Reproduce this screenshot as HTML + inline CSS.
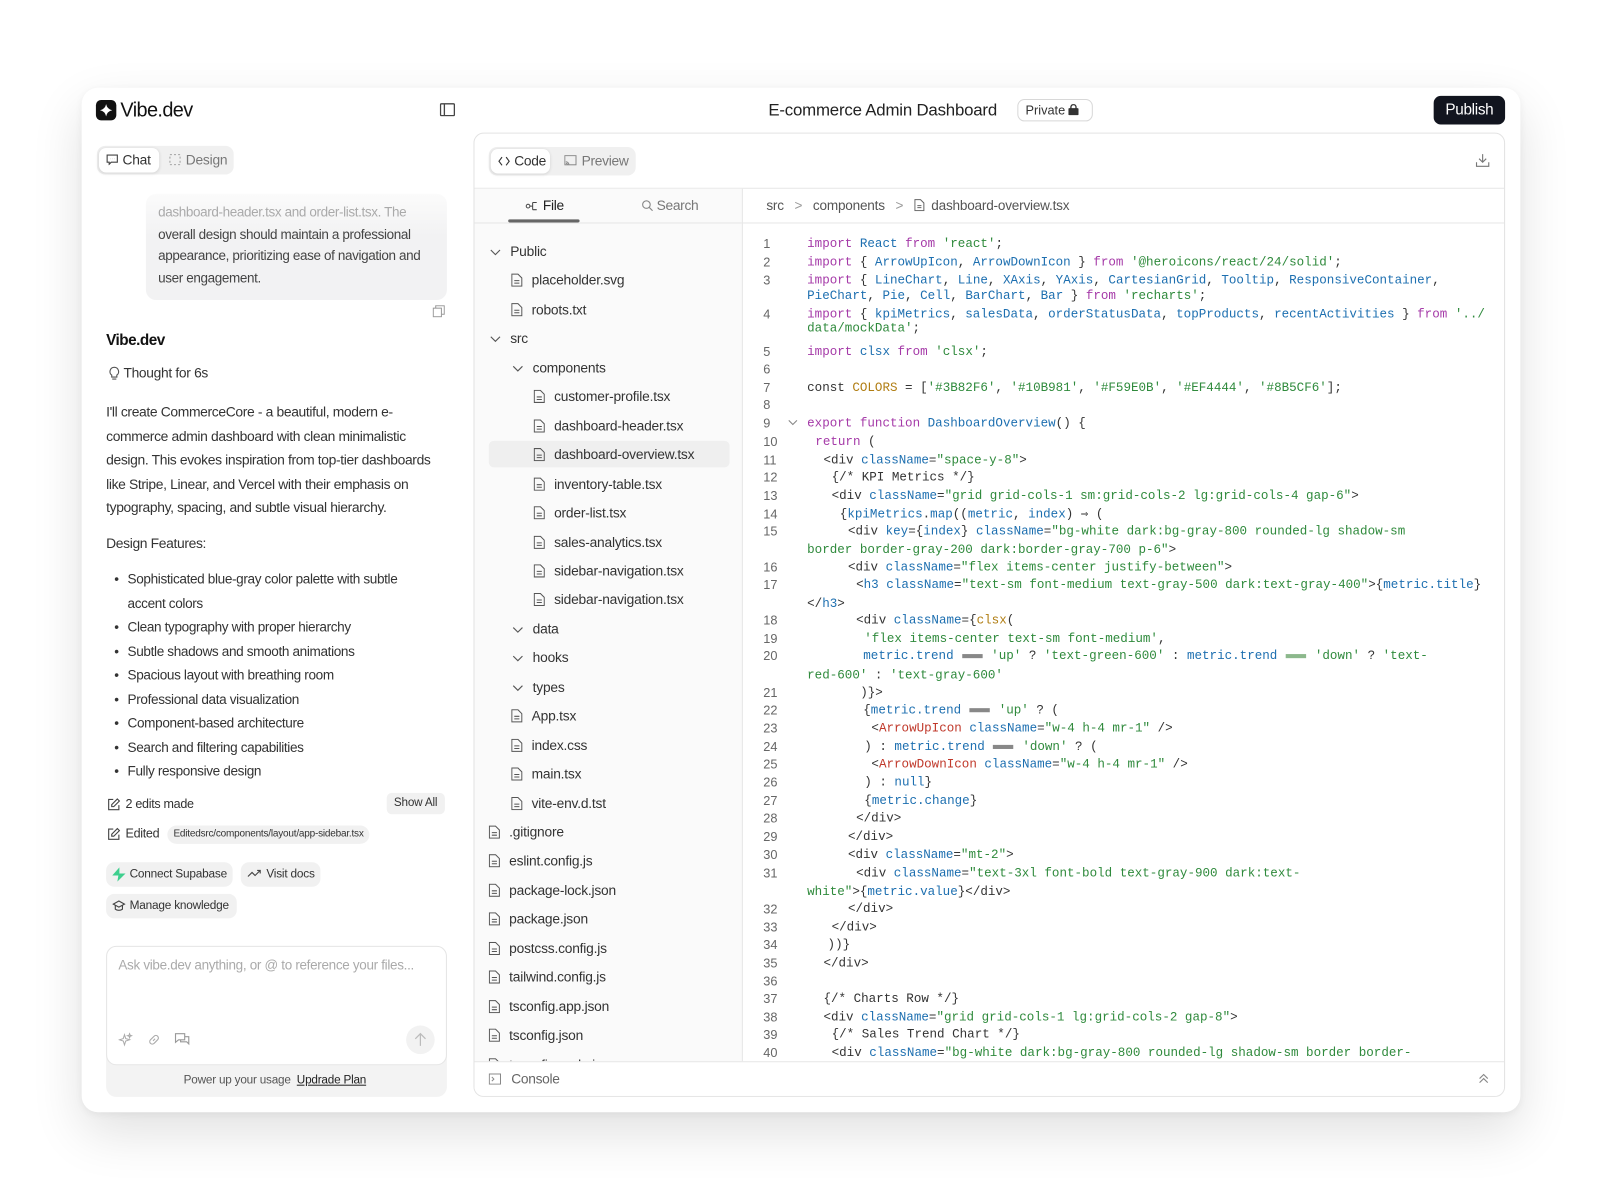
<!DOCTYPE html>
<html><head><meta charset="utf-8">
<style>
*{box-sizing:border-box;margin:0;padding:0}
html,body{width:1600px;height:1200px;overflow:hidden;background:#fff;font-family:"Liberation Sans",sans-serif;color:#222}
#st{position:absolute;left:0;top:0;width:1568px;height:1176px;transform:scale(1.0204);transform-origin:0 0;background:#fff}
.a{position:absolute;white-space:nowrap}
.card{position:absolute;left:80px;top:86px;width:1410px;height:1004px;background:#fff;border-radius:16px;box-shadow:0 20px 50px rgba(0,0,0,.12),0 2px 8px rgba(0,0,0,.05)}
.panel{position:absolute;left:464px;top:130px;width:1011px;height:945px;border:1px solid #e3e3e3;border-radius:10px;background:#fff;overflow:hidden}
.tree{position:absolute;left:0;top:54px;width:263px;height:856px;background:#fafafa;border-right:1px solid #e6e6e6;overflow:hidden}
.row{position:absolute;font-size:13.5px;color:#333;height:20px;line-height:20px;letter-spacing:-.2px;white-space:nowrap}
.row svg{display:block}
.code{position:absolute;left:263px;top:88px;right:0;height:822px;overflow:hidden;font-family:"Liberation Mono",monospace;font-size:12.3px}
.ln{position:absolute;left:20px;width:20px;color:#666;font-family:"Liberation Sans",sans-serif;font-size:12.5px;height:18px;line-height:18px}
.cl{position:absolute;height:18px;line-height:18px;white-space:pre;color:#333}
.k{color:#a53aa8}.b{color:#1d6fb0}.s{color:#2f8a3c}.o{color:#b07d12}.r{color:#c0392b}.g{color:#555}
.eq{display:inline-block;width:20px;height:4px;background:#888;vertical-align:middle;margin:0 1px}
.eqg{background:#8cb88c}
.pill{position:absolute;background:#f1f1f1;border-radius:8px;font-size:12px;color:#333;height:24px;line-height:24px;padding:0 7px;white-space:nowrap;letter-spacing:-.2px}
.p{position:absolute;font-size:13.6px;color:#333;line-height:23.5px;white-space:nowrap;letter-spacing:-.35px}
</style></head><body><div id="st">
<div class="card"></div>
<div class="a" style="left:94px;top:98px;width:20px;height:20px;background:#111;border-radius:5px"><svg width="20" height="20" viewBox="0 0 20 20"><path d="M10 4 Q11 9 16 10 Q11 11 10 16 Q9 11 4 10 Q9 9 10 4Z" fill="#fff"/></svg></div>
<div class="a" style="left:118px;top:97px;font-size:19.5px;color:#111;letter-spacing:-.6px">Vibe.dev</div>
<svg class="a" style="left:431px;top:101px" width="15" height="13" viewBox="0 0 15 13"><rect x=".7" y=".7" width="13.6" height="11.6" rx="1" fill="none" stroke="#444" stroke-width="1.3"/><line x1="4.5" y1="1" x2="4.5" y2="12" stroke="#444" stroke-width="1.3"/></svg>
<div class="a" style="left:753px;top:99px;font-size:16.5px;color:#222;letter-spacing:-.2px">E-commerce Admin Dashboard</div>
<div class="a" style="left:997px;top:97px;width:74px;height:22px;border:1px solid #d8d8d8;border-radius:7px;font-size:12.5px;line-height:20px;padding-left:7px;color:#333">Private <svg width="10" height="11" viewBox="0 0 10 11" style="vertical-align:-1px"><rect x="0" y="4" width="10" height="7" rx="1" fill="#333"/><path d="M2.5 4.5V3a2.5 2.5 0 015 0v1.5" fill="none" stroke="#333" stroke-width="1.3"/></svg></div>
<div class="a" style="left:1405px;top:94px;width:70px;height:28px;background:#12151f;border-radius:7px;color:#fff;font-size:15px;line-height:28px;text-align:center;letter-spacing:-.3px">Publish</div>
<div class="a" style="left:95px;top:143px;width:134px;height:28px;background:#f0f0f0;border-radius:8px"></div>
<div class="a" style="left:97px;top:145px;width:59px;height:24px;background:#fff;border-radius:7px;box-shadow:0 1px 3px rgba(0,0,0,.12)"></div>
<svg class="a" style="left:104px;top:151px" width="12" height="11" viewBox="0 0 12 11"><path d="M1 1h10v7H5l-2 2V8H1z" fill="none" stroke="#444" stroke-width="1.1"/><path d="M4 4.5h.1M6 4.5h.1M8 4.5h.1" stroke="#444" stroke-width="1.3"/></svg>
<div class="a" style="left:120px;top:149px;font-size:13.5px;color:#333;letter-spacing:-.2px">Chat</div>
<svg class="a" style="left:166px;top:151px" width="11" height="11"><rect x=".5" y=".5" width="10" height="10" fill="none" stroke="#999" stroke-dasharray="2 2"/></svg>
<div class="a" style="left:182px;top:149px;font-size:13.5px;color:#777;letter-spacing:-.2px">Design</div>
<div class="a" style="left:143px;top:190px;width:295px;height:104px;border-radius:10px;background:linear-gradient(#fbfbfb,#f2f2f3 40%)"></div>
<div class="a" style="left:155px;top:197px;font-size:13.2px;line-height:21.5px;color:#444;letter-spacing:-.35px">
<span style="color:#aaa">dashboard-header.tsx and order-list.tsx. The</span><br>overall design should maintain a professional<br>appearance, prioritizing ease of navigation and<br>user engagement.</div>
<svg class="a" style="left:424px;top:299px" width="12" height="12" viewBox="0 0 12 12"><rect x=".6" y="3" width="8" height="8.4" fill="none" stroke="#999"/><path d="M3 3V.6h8.4V9H9" fill="none" stroke="#999"/></svg>
<div class="a" style="left:104px;top:325px;font-size:15px;font-weight:bold;color:#111;letter-spacing:-.5px">Vibe.dev</div>
<svg class="a" style="left:106px;top:359px" width="12" height="14" viewBox="0 0 12 14"><path d="M6 1a4.2 4.2 0 00-2.5 7.6V10.5h5V8.6A4.2 4.2 0 006 1zM4 12.5h4" fill="none" stroke="#555" stroke-width="1.1"/></svg>
<div class="a" style="left:121px;top:358px;font-size:13.5px;color:#333;letter-spacing:-.3px">Thought for 6s</div>
<div class="p" style="left:104px;top:392px">I'll create CommerceCore - a beautiful, modern e-<br>commerce admin dashboard with clean minimalistic<br>design. This evokes inspiration from top-tier dashboards<br>like Stripe, Linear, and Vercel with their emphasis on<br>typography, spacing, and subtle visual hierarchy.</div>
<div class="p" style="left:104px;top:521px">Design Features:</div>
<div class="p" style="left:112px;top:556px;font-size:13.3px">•<br><br>•<br>•<br>•<br>•<br>•<br>•<br>•</div>
<div class="p" style="left:125px;top:556px;font-size:13.3px">Sophisticated blue-gray color palette with subtle<br>accent colors<br>Clean typography with proper hierarchy<br>Subtle shadows and smooth animations<br>Spacious layout with breathing room<br>Professional data visualization<br>Component-based architecture<br>Search and filtering capabilities<br>Fully responsive design</div>
<svg class="a" style="left:105px;top:782px" width="13" height="13" viewBox="0 0 13 13"><path d="M6 1.5H1.5v10h10V7" fill="none" stroke="#444" stroke-width="1.1"/><path d="M10 1l2 2-5.5 5.5H4.5v-2z" fill="none" stroke="#444" stroke-width="1.1"/></svg>
<div class="a" style="left:123px;top:781px;font-size:12.3px;color:#333;letter-spacing:-.3px">2 edits made</div>
<div class="pill" style="left:379px;top:777px;height:21px;line-height:21px;font-size:11.5px;border-radius:5px">Show All</div>
<svg class="a" style="left:105px;top:811px" width="13" height="13" viewBox="0 0 13 13"><path d="M6 1.5H1.5v10h10V7" fill="none" stroke="#444" stroke-width="1.1"/><path d="M10 1l2 2-5.5 5.5H4.5v-2z" fill="none" stroke="#444" stroke-width="1.1"/></svg>
<div class="a" style="left:123px;top:810px;font-size:12.3px;color:#333;letter-spacing:-.3px">Edited</div>
<div class="pill" style="left:164px;top:809px;height:18px;line-height:18px;font-size:9.8px;border-radius:9px;padding:0 6px;letter-spacing:-.2px">Editedsrc/components/layout/app-sidebar.tsx</div>
<div class="pill" style="left:104px;top:845px;width:124px;padding-left:23px;font-size:11.6px">Connect Supabase</div>
<svg class="a" style="left:110px;top:850px" width="13" height="14" viewBox="0 0 13 14"><path d="M7 0L0 8h6l-1 6 8-8H7z" fill="#3ecf8e"/></svg>
<div class="pill" style="left:236px;top:845px;width:78px;padding-left:25px;font-size:11.6px">Visit docs</div>
<svg class="a" style="left:242px;top:851px" width="14" height="10" viewBox="0 0 14 10"><path d="M1 8l4-4 3 3 5-5M10 2h3v3" fill="none" stroke="#444" stroke-width="1.1"/></svg>
<div class="pill" style="left:104px;top:876px;width:128px;padding-left:23px;font-size:11.6px">Manage knowledge</div>
<svg class="a" style="left:110px;top:882px" width="13" height="12" viewBox="0 0 13 12"><path d="M6.5 1L12 4 6.5 7 1 4zM3 5.5V9c2 1.5 5 1.5 7 0V5.5" fill="none" stroke="#444" stroke-width="1.1"/></svg>
<div class="a" style="left:104px;top:927px;width:334px;height:148px;background:#f3f3f3;border-radius:10px"></div>
<div class="a" style="left:104px;top:927px;width:334px;height:117px;background:#fff;border:1px solid #e5e5e5;border-radius:10px"></div>
<div class="a" style="left:116px;top:938px;font-size:13.2px;color:#aaa;letter-spacing:-.3px">Ask vibe.dev anything, or @ to reference your files...</div>
<svg class="a" style="left:116px;top:1012px" width="14" height="14" viewBox="0 0 14 14"><path d="M6 2l1.2 3.8L11 7 7.2 8.2 6 12 4.8 8.2 1 7l3.8-1.2zM11 1l.5 1.5L13 3l-1.5.5L11 5l-.5-1.5L9 3l1.5-.5z" fill="none" stroke="#aaa" stroke-width="1"/></svg>
<svg class="a" style="left:144px;top:1012px" width="14" height="14" viewBox="0 0 14 14"><path d="M6 8l2-2M5 5.5L7 3.5a2.4 2.4 0 013.5 3.5L8.5 9M9 8.5L7 10.5A2.4 2.4 0 013.5 7L5.5 5" fill="none" stroke="#aaa" stroke-width="1.1"/></svg>
<svg class="a" style="left:171px;top:1012px" width="15" height="14" viewBox="0 0 15 14"><path d="M1 1h9v6H4l-3 2.5zM10 4h4v7l-2-2H6V7" fill="none" stroke="#999" stroke-width="1.1"/></svg>
<div class="a" style="left:398px;top:1005px;width:28px;height:28px;border-radius:14px;background:#f2f2f2"></div>
<svg class="a" style="left:406px;top:1012px" width="12" height="14" viewBox="0 0 12 14"><path d="M6 13V1M1 6l5-5 5 5" fill="none" stroke="#bbb" stroke-width="1.2"/></svg>
<div class="a" style="left:180px;top:1053px;font-size:11.5px;color:#555;letter-spacing:-.2px">Power up your usage &nbsp;<span style="color:#222;text-decoration:underline">Updrade Plan</span></div>
<div class="panel">
 <div class="a" style="left:0;top:53px;width:100%;height:1px;background:#e6e6e6"></div>
 <div class="a" style="left:14px;top:13px;width:144px;height:28px;background:#f0f0f0;border-radius:8px"></div>
 <div class="a" style="left:16px;top:15px;width:58px;height:24px;background:#fff;border-radius:7px;box-shadow:0 1px 3px rgba(0,0,0,.12)"></div>
 <svg class="a" style="left:23px;top:22px" width="12" height="10" viewBox="0 0 12 10"><path d="M4 1L1 5l3 4M8 1l3 4-3 4" fill="none" stroke="#333" stroke-width="1.1"/></svg>
 <div class="a" style="left:39px;top:19px;font-size:13.5px;color:#333;letter-spacing:-.3px">Code</div>
 <svg class="a" style="left:88px;top:21px" width="12" height="11"><rect x=".5" y=".5" width="11" height="9" fill="none" stroke="#888"/><path d="M1.5 6.5a3 3 0 013 3M1.5 8a1.5 1.5 0 011.5 1.5" fill="none" stroke="#888"/></svg>
 <div class="a" style="left:105px;top:19px;font-size:13.5px;color:#777;letter-spacing:-.3px">Preview</div>
 <svg class="a" style="left:981px;top:19px" width="14" height="14" viewBox="0 0 14 14"><path d="M7 1v8M3.5 5.5L7 9l3.5-3.5M1 9v4h12V9" fill="none" stroke="#777" stroke-width="1.1"/></svg>
 <div class="tree">
  <div class="a" style="left:0;top:33px;width:263px;height:1px;background:#e6e6e6"></div>
  <div class="a" style="left:33px;top:30px;width:70px;height:3px;background:#666;border-radius:2px"></div>
  <svg class="a" style="left:50px;top:12px" width="12" height="10" viewBox="0 0 12 10"><circle cx="2.5" cy="5" r="1.8" fill="none" stroke="#444"/><path d="M4.3 5H7M7 1.5v7M7 1.5h4M7 8.5h4" fill="none" stroke="#444"/></svg>
  <div class="a" style="left:67px;top:9px;font-size:13.5px;color:#222;letter-spacing:-.3px">File</div>
  <div class="a" style="left:164px;top:9px;font-size:13.5px;color:#777;letter-spacing:-.3px">
   <svg width="11" height="11" viewBox="0 0 11 11" style="vertical-align:-1px"><circle cx="4.5" cy="4.5" r="3.7" fill="none" stroke="#888" stroke-width="1.1"/><path d="M7.3 7.3L10.5 10.5" stroke="#888" stroke-width="1.1"/></svg> Search</div>
 </div>
 <div class="a" style="left:14px;top:301px;width:236px;height:26px;background:#efefef;border-radius:5px"></div>
 <div id="tr"></div>
 <div class="a" style="left:263px;top:54px;right:0;height:34px;border-bottom:1px solid #e6e6e6"></div>
 <div class="a" style="left:286px;top:63px;font-size:13.3px;color:#555;letter-spacing:-.2px">src &nbsp;&nbsp;<span style="color:#999">&gt;</span>&nbsp;&nbsp; components &nbsp;&nbsp;<span style="color:#999">&gt;</span>&nbsp;&nbsp; <svg width="10" height="12" viewBox="0 0 10 12" style="vertical-align:-1px"><path d="M.6.6h5.5l3.3 3.3v7.5H.6z M3 6.5h4M3 8.5h4" fill="none" stroke="#666" stroke-width="1"/></svg>&nbsp; dashboard-overview.tsx</div>
 <div class="code" id="cd"></div>
 <div class="a" style="left:0;top:909px;width:100%;height:36px;border-top:1px solid #e6e6e6;background:#fff"></div>
 <svg class="a" style="left:14px;top:921px" width="12" height="11"><rect x=".5" y=".5" width="11" height="10" fill="none" stroke="#888"/><path d="M3 3.5l2 2-2 2" fill="none" stroke="#888"/></svg>
 <div class="a" style="left:36px;top:919px;font-size:13.5px;color:#666;letter-spacing:-.3px">Console</div>
 <svg class="a" style="left:983px;top:920px" width="12" height="12" viewBox="0 0 12 12"><path d="M2 6l4-4 4 4M2 10l4-4 4 4" fill="none" stroke="#888" stroke-width="1.1"/></svg>
</div>
</div>
<script>
var F='<svg width="11" height="13" viewBox="0 0 11 13"><path d="M.6.6h6l3.8 3.8v8H.6z M3 7h5M3 9.5h5" fill="none" stroke="#555" stroke-width="1"/></svg>';
var C='<svg width="11" height="7" viewBox="0 0 11 7"><path d="M1 1l4.5 4.5L10 1" fill="none" stroke="#555" stroke-width="1.1"/></svg>';
var items=[[0,'c','Public'],[1,'f','placeholder.svg'],[1,'f','robots.txt'],[0,'c','src'],[1,'c','components'],[2,'f','customer-profile.tsx'],[2,'f','dashboard-header.tsx'],[2,'f','dashboard-overview.tsx'],[2,'f','inventory-table.tsx'],[2,'f','order-list.tsx'],[2,'f','sales-analytics.tsx'],[2,'f','sidebar-navigation.tsx'],[2,'f','sidebar-navigation.tsx'],[1,'c','data'],[1,'c','hooks'],[1,'c','types'],[1,'f','App.tsx'],[1,'f','index.css'],[1,'f','main.tsx'],[1,'f','vite-env.d.tst'],[0,'f','.gitignore'],[0,'f','eslint.config.js'],[0,'f','package-lock.json'],[0,'f','package.json'],[0,'f','postcss.config.js'],[0,'f','tailwind.config.js'],[0,'f','tsconfig.app.json'],[0,'f','tsconfig.json'],[0,'f','tsconfig.node.json']];
var h='';items.forEach(function(it,i){var y=116+28.45*i-10;var ix,tx,off;
if(it[1]=='c'){ix=[15,37][it[0]];tx=ix+20;off=7;}else{ix=[14,36,58][it[0]];tx=ix+20;off=3;}
h+='<div class="row" style="left:'+ix+'px;top:'+(y+off)+'px;height:auto;line-height:0">'+(it[1]=='c'?C:F)+'</div><div class="row" style="left:'+tx+'px;top:'+y+'px">'+it[2]+'</div>';});
document.getElementById('tr').innerHTML=h;
var E='<span class="eq"></span>',EG='<span class="eq eqg"></span>';
function k(t){return '<span class="k">'+t+'</span>'}function b(t){return '<span class="b">'+t+'</span>'}function s(t){return '<span class="s">'+t+'</span>'}function o(t){return '<span class="o">'+t+'</span>'}function r(t){return '<span class="r">'+t+'</span>'}
var L=[
[1,238,791,k('import')+' '+b('React')+' '+k('from')+' '+s("'react'")+';'],
[2,256,791,k('import')+' { '+b('ArrowUpIcon')+', '+b('ArrowDownIcon')+' } '+k('from')+' '+s("'@heroicons/react/24/solid'")+';'],
[3,274,791,k('import')+' { '+b('LineChart')+', '+b('Line')+', '+b('XAxis')+', '+b('YAxis')+', '+b('CartesianGrid')+', '+b('Tooltip')+', '+b('ResponsiveContainer')+','],
[0,289,791,b('PieChart')+', '+b('Pie')+', '+b('Cell')+', '+b('BarChart')+', '+b('Bar')+' } '+k('from')+' '+s("'recharts'")+';'],
[4,307,791,k('import')+' { '+b('kpiMetrics')+', '+b('salesData')+', '+b('orderStatusData')+', '+b('topProducts')+', '+b('recentActivities')+' } '+k('from')+' '+s("'../")],
[0,321,791,s("data/mockData'")+';'],
[5,344,791,k('import')+' '+b('clsx')+' '+k('from')+' '+s("'clsx'")+';'],
[6,361,791,''],
[7,379,791,'const '+o('COLORS')+' = ['+s("'#3B82F6'")+', '+s("'#10B981'")+', '+s("'#F59E0B'")+', '+s("'#EF4444'")+', '+s("'#8B5CF6'")+'];'],
[8,396,791,''],
[9,414,791,k('export')+' '+k('function')+' '+b('DashboardOverview')+'() {'],
[10,432,799,k('return')+' ('],
[11,450,807,'&lt;div '+b('className')+'='+s('"space-y-8"')+'&gt;'],
[12,467,815,'{/* KPI Metrics */}'],
[13,485,815,'&lt;div '+b('className')+'='+s('"grid grid-cols-1 sm:grid-cols-2 lg:grid-cols-4 gap-6"')+'&gt;'],
[14,503,823,'{'+b('kpiMetrics')+'.'+b('map')+'(('+b('metric')+', '+b('index')+') ⇒ ('],
[15,520,831,'&lt;div '+b('key')+'={'+b('index')+'} '+b('className')+'='+s('"bg-white dark:bg-gray-800 rounded-lg shadow-sm')],
[0,538,791,s('border border-gray-200 dark:border-gray-700 p-6"')+'&gt;'],
[16,555,831,'&lt;div '+b('className')+'='+s('"flex items-center justify-between"')+'&gt;'],
[17,572,839,'&lt;'+b('h3')+' '+b('className')+'='+s('"text-sm font-medium text-gray-500 dark:text-gray-400"')+'&gt;{'+b('metric.title')+'}'],
[0,591,791,'&lt;/'+b('h3')+'&gt;'],
[18,607,839,'&lt;div '+b('className')+'={'+o('clsx')+'('],
[19,625,847,s("'flex items-center text-sm font-medium'")+','],
[20,642,846,b('metric.trend')+' '+E+' '+s("'up'")+' ? '+s("'text-green-600'")+' : '+b('metric.trend')+' '+EG+' '+s("'down'")+' ? '+s("'text-")],
[0,661,791,s("red-600'")+' : '+s("'text-gray-600'")],
[21,678,843,')}&gt;'],
[22,695,846,'{'+b('metric.trend')+' '+E+' '+s("'up'")+' ? ('],
[23,713,854,'&lt;'+r('ArrowUpIcon')+' '+b('className')+'='+s('"w-4 h-4 mr-1"')+' /&gt;'],
[24,731,847,') : '+b('metric.trend')+' '+E+' '+s("'down'")+' ? ('],
[25,748,854,'&lt;'+r('ArrowDownIcon')+' '+b('className')+'='+s('"w-4 h-4 mr-1"')+' /&gt;'],
[26,766,847,') : '+b('null')+'}'],
[27,784,847,'{'+b('metric.change')+'}'],
[28,801,839,'&lt;/div&gt;'],
[29,819,831,'&lt;/div&gt;'],
[30,837,831,'&lt;div '+b('className')+'='+s('"mt-2"')+'&gt;'],
[31,855,839,'&lt;div '+b('className')+'='+s('"text-3xl font-bold text-gray-900 dark:text-')],
[0,873,791,s('white"')+'&gt;{'+b('metric.value')+'}&lt;/div&gt;'],
[32,890,831,'&lt;/div&gt;'],
[33,908,815,'&lt;/div&gt;'],
[34,925,811,'))}'],
[35,943,807,'&lt;/div&gt;'],
[36,961,807,''],
[37,978,807,'{/* Charts Row */}'],
[38,996,807,'&lt;div '+b('className')+'='+s('"grid grid-cols-1 lg:grid-cols-2 gap-8"')+'&gt;'],
[39,1013,815,'{/* Sales Trend Chart */}'],
[40,1031,815,'&lt;div '+b('className')+'='+s('"bg-white dark:bg-gray-800 rounded-lg shadow-sm border border-')]
];
var c='';L.forEach(function(l){var t=l[1]-218-9;if(l[0])c+='<div class="ln" style="top:'+t+'px">'+l[0]+'</div>';c+='<div class="cl" style="left:'+(l[2]-728)+'px;top:'+t+'px">'+l[3]+'</div>';});
c+='<svg style="position:absolute;left:44px;top:192px" width="10" height="7" viewBox="0 0 10 7"><path d="M1 1l4 4 4-4" fill="none" stroke="#888" stroke-width="1.1"/></svg>';
document.getElementById('cd').innerHTML=c;
</script>
</body></html>
